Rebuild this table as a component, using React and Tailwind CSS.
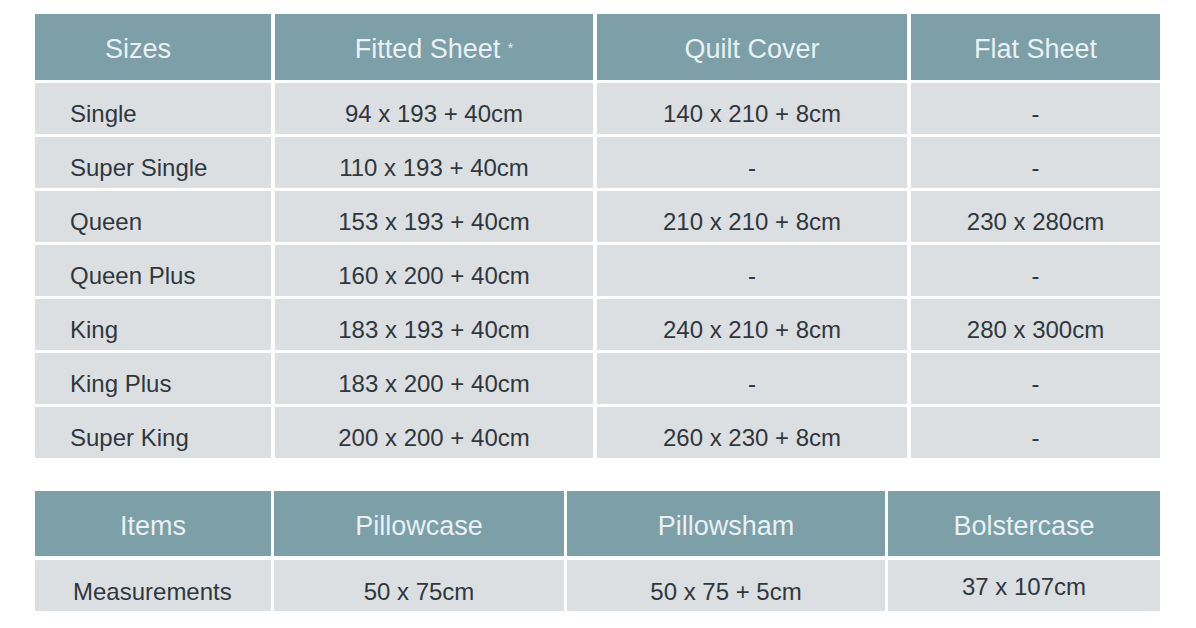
import React from 'react'

const sizes = [
  ['Single', '94 x 193 + 40cm', '140 x 210 + 8cm', '-'],
  ['Super Single', '110 x 193 + 40cm', '-', '-'],
  ['Queen', '153 x 193 + 40cm', '210 x 210 + 8cm', '230 x 280cm'],
  ['Queen Plus', '160 x 200 + 40cm', '-', '-'],
  ['King', '183 x 193 + 40cm', '240 x 210 + 8cm', '280 x 300cm'],
  ['King Plus', '183 x 200 + 40cm', '-', '-'],
  ['Super King', '200 x 200 + 40cm', '260 x 230 + 8cm', '-'],
]

const HeadCell = ({ children, extra = '' }) => (
  <div className={'bg-[#7c9fa8] text-[#e8f1f3] text-[27px] flex items-center justify-center h-[66px] pt-[5px] ' + extra}>
    {children}
  </div>
)

const BodyCell = ({ children, first }) => (
  <div
    className={
      'bg-[#dbdfe2] text-[#30373c] text-[24px] flex items-center h-[51px] pt-[11px] ' +
      (first ? 'justify-start pl-[35px]' : 'justify-center')
    }
  >
    {children}
  </div>
)

const App = () => {
  return (
    <div className="w-[1196px] h-[628px] bg-white pt-[14px] pl-[35px]" style={{ fontFamily: '"Liberation Sans", Arial, sans-serif' }}>
      <div className="grid grid-cols-[236px_318px_310px_249px] gap-x-[4px] gap-y-[3px] w-[1125px]">
        <HeadCell extra="pr-[30px]">Sizes</HeadCell>
        <HeadCell>
          <span>Fitted Sheet <sup className="text-[14px] relative -top-[5px]">*</sup></span>
        </HeadCell>
        <HeadCell>Quilt Cover</HeadCell>
        <HeadCell>Flat Sheet</HeadCell>
        {sizes.map((r, i) => (
          <React.Fragment key={i}>
            {r.map((c, j) => (
              <BodyCell key={j} first={j === 0}>{c}</BodyCell>
            ))}
          </React.Fragment>
        ))}
      </div>

      <div className="grid grid-cols-[236px_290px_318px_272px] gap-x-[3px] gap-y-[4px] w-[1125px] mt-[33px]">
        <div className="bg-[#7c9fa8] text-[#e8f1f3] text-[27px] flex items-center justify-center h-[65px] pt-[6px]">Items</div>
        <div className="bg-[#7c9fa8] text-[#e8f1f3] text-[27px] flex items-center justify-center h-[65px] pt-[6px]">Pillowcase</div>
        <div className="bg-[#7c9fa8] text-[#e8f1f3] text-[27px] flex items-center justify-center h-[65px] pt-[6px]">Pillowsham</div>
        <div className="bg-[#7c9fa8] text-[#e8f1f3] text-[27px] flex items-center justify-center h-[65px] pt-[6px]">Bolstercase</div>
        <div className="bg-[#dbdfe2] text-[#30373c] text-[24px] flex items-center h-[51px] pt-[12px] pl-[38px]">Measurements</div>
        <div className="bg-[#dbdfe2] text-[#30373c] text-[24px] flex items-center justify-center h-[51px] pt-[12px]">50 x 75cm</div>
        <div className="bg-[#dbdfe2] text-[#30373c] text-[24px] flex items-center justify-center h-[51px] pt-[12px]">50 x 75 + 5cm</div>
        <div className="bg-[#dbdfe2] text-[#30373c] text-[24px] flex items-center justify-center h-[51px] pt-[2px]">37 x 107cm</div>
      </div>
    </div>
  )
}

export default App
